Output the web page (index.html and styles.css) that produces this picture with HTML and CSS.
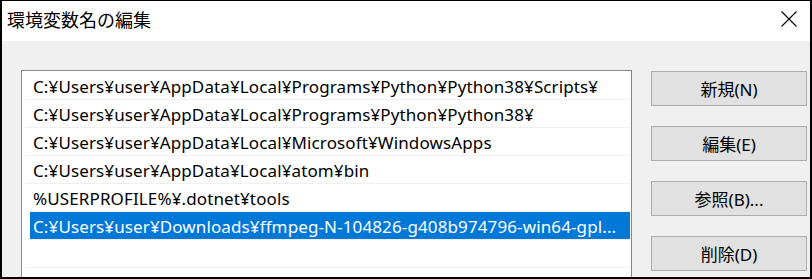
FILE: index.html
```html
<!DOCTYPE html>
<html>
<head>
    <title>環境変数名の編集</title>
    <link rel="stylesheet" href="styles.css">
</head>
<body>
    <div class="window">
        <div class="titlebar">
            <span class="title">環境変数名の編集</span>
            <svg class="close" width="16" height="16" viewBox="0 0 16 16">
                <path d="M0.5 0.5 L15.5 15.5 M15.5 0.5 L0.5 15.5" stroke="#000" stroke-width="1.1" fill="none"/>
            </svg>
        </div>
        <div class="content">
            <div class="listbox">
                <div class="row"><span class="row-text">C:¥Users¥user¥AppData¥Local¥Programs¥Python¥Python38¥Scripts¥</span></div>
                <div class="row"><span class="row-text">C:¥Users¥user¥AppData¥Local¥Programs¥Python¥Python38¥</span></div>
                <div class="row"><span class="row-text">C:¥Users¥user¥AppData¥Local¥Microsoft¥WindowsApps</span></div>
                <div class="row"><span class="row-text">C:¥Users¥user¥AppData¥Local¥atom¥bin</span></div>
                <div class="row"><span class="row-text">%USERPROFILE%¥.dotnet¥tools</span></div>
                <div class="row selected"><span class="row-text">C:¥Users¥user¥Downloads¥ffmpeg-N-104826-g408b974796-win64-gpl...</span></div>
                <div class="row"><span class="row-text"></span></div>
                <div class="row"><span class="row-text"></span></div>
            </div>
            <div class="buttons">
                <button class="btn">新規(N)</button>
                <button class="btn">編集(E)</button>
                <button class="btn">参照(B)...</button>
                <button class="btn">削除(D)</button>
            </div>
        </div>
    </div>
</body>
</html>
```

FILE: styles.css
```css
body {
    margin: 0;
    padding: 0;
    font-family: "Noto Sans", "Noto Sans CJK JP", sans-serif;
    background-color: #fff;
}
.window {
    width: 812px;
    height: 279px;
    box-sizing: border-box;
    border-style: solid;
    border-color: #000;
    border-width: 1px 2px 2px 2px;
    background-color: #f0f0f0;
    overflow: hidden;
}
.titlebar {
    height: 40px;
    background-color: #fff;
    display: flex;
    align-items: center;
    justify-content: space-between;
    padding: 0 13px 4px 5px;
    box-sizing: border-box;
}
.title {
    font-size: 18px;
    color: #000;
}
.close {
    display: block;
}
.content {
    display: flex;
    gap: 19px;
    padding: 29px 0 0 19px;
}
.listbox {
    width: 611px;
    height: 260px;
    box-sizing: border-box;
    border: 1px solid #828790;
    background-color: #fff;
    padding: 1px 1px 0 3px;
    flex-shrink: 0;
}
.row {
    height: 28px;
    box-sizing: border-box;
    border-bottom: 1px solid #f0f0f0;
}
.row-text {
    display: block;
    height: 27px;
    line-height: 29px;
    margin-left: 5px;
    padding-left: 3px;
    font-size: 17px;
    letter-spacing: 0.12px;
    color: #000;
    white-space: nowrap;
    overflow: hidden;
}
.selected .row-text {
    background-color: #0078d7;
    color: #fff;
}
.buttons {
    display: flex;
    flex-direction: column;
    gap: 20px;
    padding-top: 1px;
}
.btn {
    width: 156px;
    height: 35px;
    box-sizing: border-box;
    border: 1px solid #adadad;
    background-color: #e1e1e1;
    font-family: "Noto Sans", "Noto Sans CJK JP", sans-serif;
    font-size: 17px;
    color: #000;
    padding: 0;
}
```
